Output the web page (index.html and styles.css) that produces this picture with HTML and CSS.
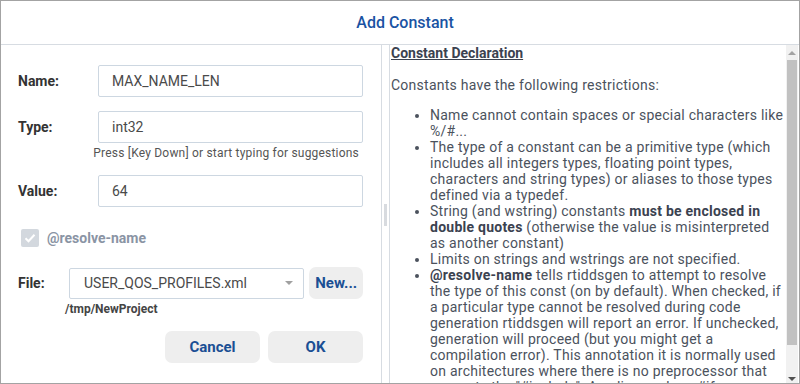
FILE: index.html
```html
<!DOCTYPE html>
<html lang="en">
<head>
	<meta charset="UTF-8">
	<meta name="viewport" content="width=device-width, initial-scale=1.0">
	<title>Add Constant</title>
	<link rel="stylesheet" href="styles.css">
</head>
<body>
	<div class="dialog">
		<div class="dialog-header">
			<span class="dialog-title">Add Constant</span>
		</div>
		<div class="dialog-body">
			<div class="form-pane">
				<div class="form-row">
					<label for="name" class="form-label">Name:</label>
					<input type="text" id="name" class="form-input" value="MAX_NAME_LEN">
				</div>
				<div class="form-row row-type">
					<label for="type" class="form-label">Type:</label>
					<input type="text" id="type" class="form-input" value="int32">
				</div>
				<div class="form-hint">Press [Key Down] or start typing for suggestions</div>
				<div class="form-row row-value">
					<label for="value" class="form-label">Value:</label>
					<input type="text" id="value" class="form-input" value="64">
				</div>
				<div class="check-row">
					<span class="check-box">
						<svg width="18" height="18" viewBox="0 0 18 18"><path d="M4.5 9.2l3 3 6-6.4" fill="none" stroke="#fff" stroke-width="2"/></svg>
					</span>
					<span class="check-label">@resolve-name</span>
				</div>
				<div class="file-row">
					<span class="form-label file-label">File:</span>
					<div class="file-select">
						<span>USER_QOS_PROFILES.xml</span>
						<span class="select-arrow"></span>
					</div>
					<button class="btn btn-new">New...</button>
				</div>
				<div class="file-path">/tmp/NewProject</div>
				<div class="actions">
					<button class="btn btn-action">Cancel</button>
					<button class="btn btn-action">OK</button>
				</div>
			</div>
			<div class="splitter">
				<div class="grip"></div>
			</div>
			<div class="help-pane">
				<div class="help-content">
					<h4 class="help-title">Constant Declaration</h4>
					<p>Constants have the following restrictions:</p>
					<ul>
						<li>Name cannot contain spaces or special characters like %/#...</li>
						<li>The type of a constant can be a primitive type (which includes all integers types, floating point types, characters and string types) or aliases to those types defined via a typedef.</li>
						<li>String (and wstring) constants <b>must be enclosed in double quotes</b> (otherwise the value is misinterpreted as another constant)</li>
						<li>Limits on strings and wstrings are not specified.</li>
						<li><b>@resolve-name</b> tells rtiddsgen to attempt to resolve the type of this const (on by default). When checked, if a particular type cannot be resolved during code generation rtiddsgen will report an error. If unchecked, generation will proceed (but you might get a compilation error). This annotation it is normally used on architectures where there is no preprocessor that supports the "#include". An alias such as #if preprocessing directives is not resolved.</li>
					</ul>
				</div>
				<div class="scrollbar">
					<div class="scroll-btn"><span class="arrow-up"></span></div>
					<div class="scroll-thumb"></div>
					<div class="scroll-rest"></div>
					<div class="scroll-btn scroll-btn-down"><span class="arrow-down"></span></div>
				</div>
			</div>
		</div>
	</div>
</body>
</html>
```

FILE: styles.css
```css
body {
	margin: 0;
	padding: 0;
	background-color: #fff;
	font-family: Roboto, "Liberation Sans", sans-serif;
	color: #333;
}

.dialog {
	width: 800px;
	height: 384px;
	box-sizing: border-box;
	border: 1px solid #a3a3a3;
	display: flex;
	flex-direction: column;
	overflow: hidden;
}

.dialog-header {
	height: 43px;
	border-bottom: 1px solid #d7dce2;
	display: flex;
	align-items: center;
	justify-content: center;
	padding-left: 10px;
	flex-shrink: 0;
}
.dialog-title {
	color: #1a53a3;
	font-size: 16px;
	font-weight: 500;
}

.dialog-body {
	flex: 1;
	display: flex;
	min-height: 0;
}

/* left form */
.form-pane {
	width: 381px;
	flex-shrink: 0;
	box-sizing: border-box;
	padding: 20px 18px 0 17px;
	border-right: 1px solid #d7dce2;
}

.form-row {
	display: flex;
	align-items: center;
	height: 32px;
}
.row-type {
	margin-top: 14px;
}
.row-value {
	margin-top: 14px;
}

.form-label {
	width: 80px;
	flex-shrink: 0;
	font-size: 14px;
	font-weight: 700;
	color: #333;
}

.form-input {
	width: 265px;
	height: 32px;
	box-sizing: border-box;
	border: 1px solid #cdd7e1;
	border-radius: 2px;
	padding: 0 13px;
	font-family: inherit;
	font-size: 14px;
	color: #4a4a4a;
	outline: none;
}

.form-hint {
	margin-top: 2px;
	text-align: right;
	padding-right: 4px;
	font-size: 12px;
	line-height: 16px;
	letter-spacing: 0.2px;
	color: #555;
}

.check-row {
	display: flex;
	align-items: center;
	margin-top: 22px;
	padding-left: 3px;
	height: 18px;
}
.check-box {
	width: 18px;
	height: 18px;
	border-radius: 2px;
	background-color: #d3d8de;
	display: flex;
}
.check-label {
	margin-left: 8px;
	font-size: 14px;
	font-weight: 700;
	color: #8a94a4;
}

.file-row {
	display: flex;
	align-items: center;
	margin-top: 20px;
	height: 32px;
}
.file-label {
	width: 51px;
}
.file-select {
	width: 237px;
	height: 31px;
	box-sizing: border-box;
	border: 1px solid #cdd7e1;
	border-radius: 2px;
	padding: 0 10px 0 14px;
	display: flex;
	align-items: center;
	justify-content: space-between;
	font-size: 14px;
	color: #4a4a4a;
}
.select-arrow {
	width: 0;
	height: 0;
	border-left: 4px solid transparent;
	border-right: 4px solid transparent;
	border-top: 4px solid #a0a0a0;
}

.btn {
	border: none;
	border-radius: 7px;
	background-color: #eeeeee;
	color: #1a4f94;
	font-family: inherit;
	font-size: 15px;
	font-weight: 700;
	cursor: pointer;
	padding: 0;
}
.btn-new {
	width: 54px;
	height: 32px;
	margin-left: 5px;
}

.file-path {
	margin-top: 2px;
	padding-left: 47px;
	font-size: 12px;
	font-weight: 700;
	line-height: 16px;
	color: #444;
}

.actions {
	display: flex;
	justify-content: flex-end;
	gap: 8px;
	margin-top: 14px;
}
.btn-action {
	width: 95px;
	height: 32px;
}

/* splitter */
.splitter {
	width: 7px;
	flex-shrink: 0;
	border-right: 1px solid #d7dce2;
	display: flex;
	align-items: center;
	justify-content: center;
}
.grip {
	width: 3px;
	height: 22px;
	background-image: radial-gradient(circle, #a9b0ba 0.6px, transparent 0.8px);
	background-size: 2px 2px;
	margin-top: 1px;
}

/* help */
.help-pane {
	flex: 1;
	display: flex;
	min-width: 0;
}
.help-content {
	flex: 1;
	overflow: hidden;
	padding: 0 2px 0 1px;
	font-size: 14px;
	line-height: 16px;
	letter-spacing: 0.25px;
	color: #4b525d;
}
.help-title {
	margin: 0 0 16px;
	font-size: 14px;
	font-weight: 700;
	letter-spacing: 0;
	text-decoration: underline;
	color: #3b4250;
}
.help-content p {
	margin: 0 0 14px;
}
.help-content ul {
	margin: 0;
	padding-left: 39px;
}
.help-content b {
	color: #3b4250;
}

.scrollbar {
	width: 12px;
	flex-shrink: 0;
	margin-right: 1px;
	background-color: #f1f1f1;
	display: flex;
	flex-direction: column;
}
.scroll-btn {
	height: 15px;
	display: flex;
	align-items: center;
	justify-content: center;
}
.scroll-btn-down {
	align-items: flex-end;
	padding-bottom: 2px;
}
.arrow-up {
	border-left: 4px solid transparent;
	border-right: 4px solid transparent;
	border-bottom: 4px solid #a3a3a3;
}
.arrow-down {
	border-left: 4px solid transparent;
	border-right: 4px solid transparent;
	border-top: 4px solid #505050;
}
.scroll-thumb {
	height: 285px;
	margin: 0 1px;
	background-color: #c1c1c1;
}
.scroll-rest {
	flex: 1;
}
```
